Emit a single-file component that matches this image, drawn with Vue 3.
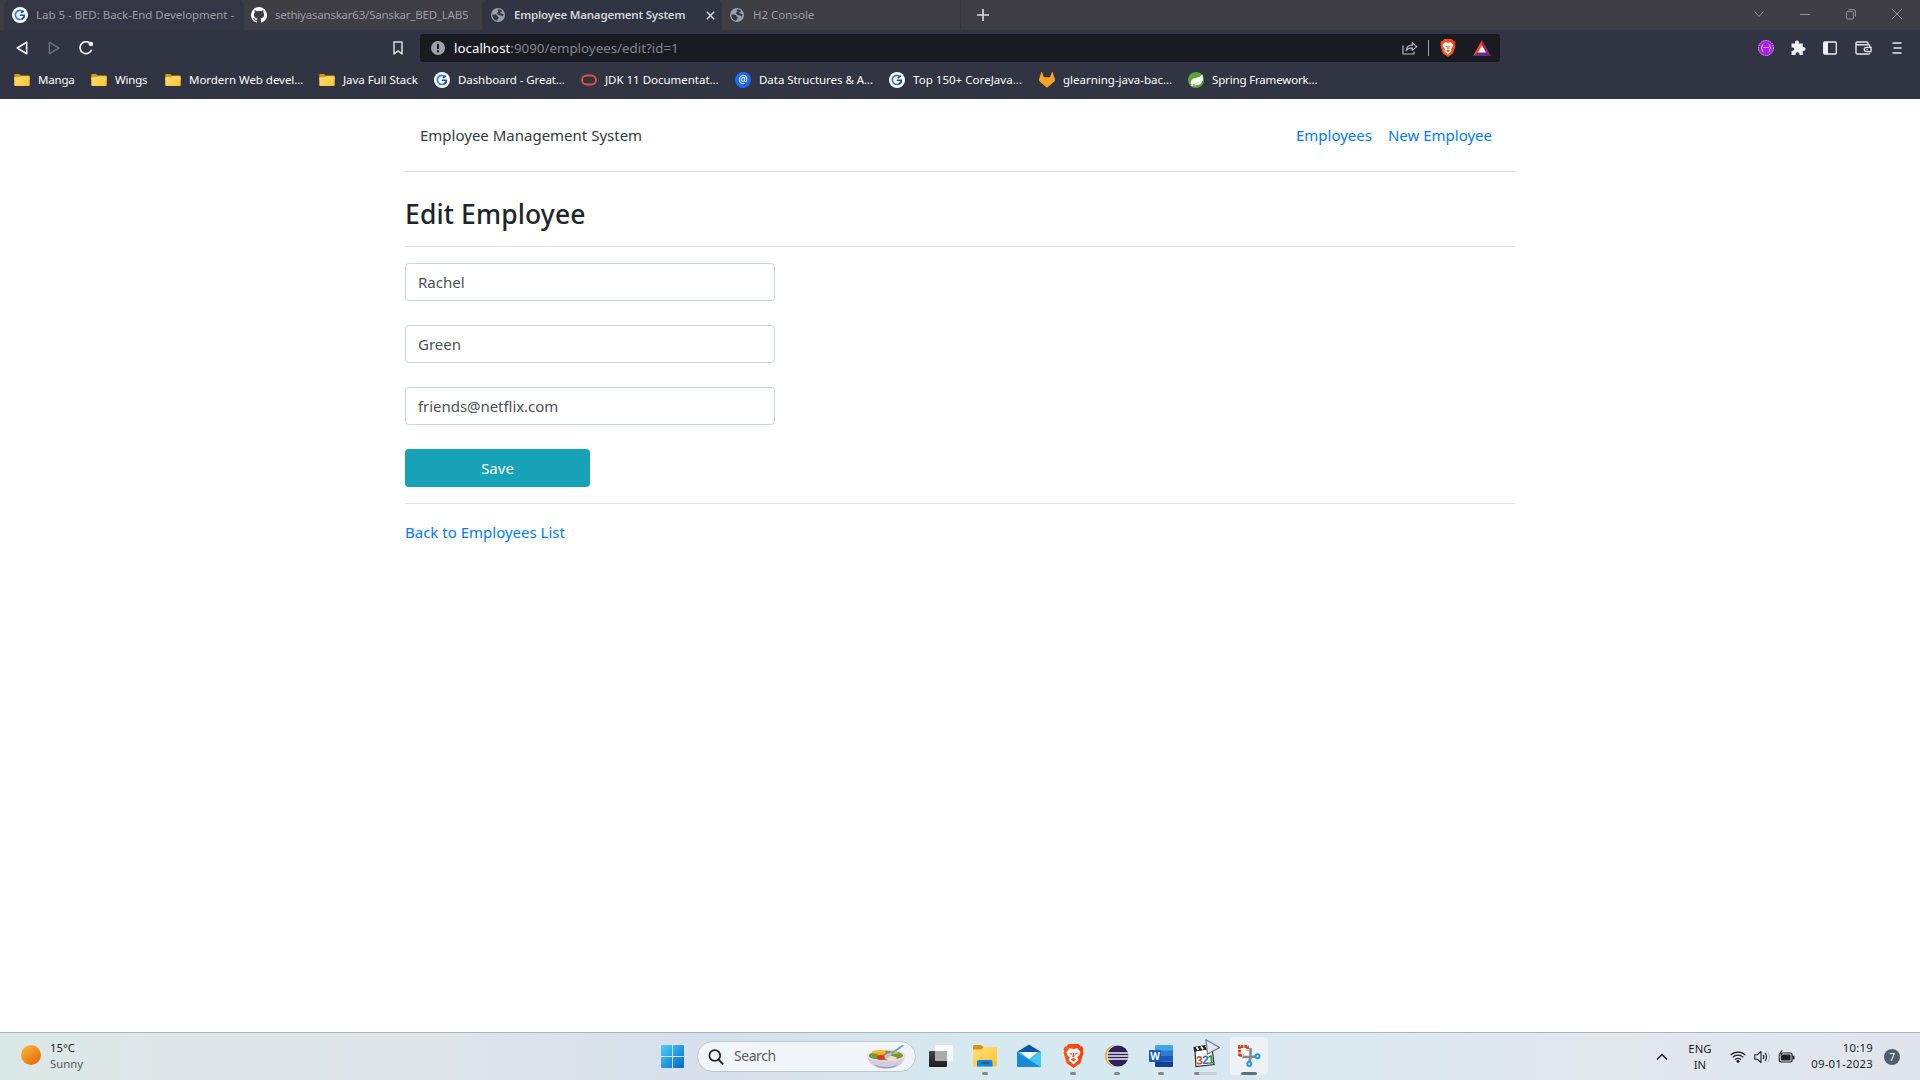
<script setup>
import { ref } from 'vue'

const firstName = ref('Rachel')
const lastName = ref('Green')
const email = ref('friends@netflix.com')

const bookmarks = [
  { icon: 'folder', label: 'Manga', width: 37, spacing: -0.2 },
  { icon: 'folder', label: 'Wings', width: 34, spacing: -0.2 },
  { icon: 'folder', label: 'Mordern Web devel...', width: 114, spacing: -0.04 },
  { icon: 'folder', label: 'Java Full Stack', width: 75, spacing: -0.04 },
  { icon: 'gl', label: 'Dashboard - Great...', width: 107, spacing: -0.08 },
  { icon: 'oracle', label: 'JDK 11 Documentat...', width: 114, spacing: -0.02 },
  { icon: 'at', label: 'Data Structures & A...', width: 114, spacing: -0.04 },
  { icon: 'gl', label: 'Top 150+ CoreJava...', width: 110, spacing: 0.04 },
  { icon: 'gitlab', label: 'glearning-java-bac...', width: 109, spacing: -0.01 },
  { icon: 'spring', label: 'Spring Framework...', width: 106, spacing: -0.16 },
]
</script>

<template>
  <div class="desktop">
    <svg class="defs" width="0" height="0" aria-hidden="true">
      <defs>
        <linearGradient id="braveG" x1="0" x2="1"><stop offset="0" stop-color="#ff5a1f" /><stop offset="1" stop-color="#fb3a0a" /></linearGradient>
        <linearGradient id="winG" x1="0" y1="0" x2="1" y2="1"><stop offset="0" stop-color="#4fd0fb" /><stop offset="1" stop-color="#0067c8" /></linearGradient>
        <linearGradient id="sunG" x1="0.1" y1="0" x2="0.8" y2="1"><stop offset="0" stop-color="#f4bc35" /><stop offset="1" stop-color="#ee650c" /></linearGradient>
        <linearGradient id="folderG" x1="0" y1="0" x2="1" y2="1"><stop offset="0" stop-color="#ffe17c" /><stop offset="1" stop-color="#fdc02f" /></linearGradient>
        <linearGradient id="darkG" x1="0" y1="0" x2="0" y2="1"><stop offset="0" stop-color="#444" /><stop offset="1" stop-color="#1c1c1c" /></linearGradient>
        <symbol id="globe" viewBox="0 0 14 14">
          <circle cx="7" cy="7" r="7" fill="#9b9ea6" />
          <path d="M1.4 6.700c2-.3 4.700 0 5 1.300.2 1 1.200.5 1.400 1.500.2 1.200-1.500 1.200-1.600 3.200C3.200 12.300 1.200 9.700 1.400 6.700zM6.500 1.600c1.700-.5 3.800.2 4.900 1.500-.8.3-1 1.200-2 1.100-.7-.1-.6.9.100 1 1.300.1 2 .8 3 1.100-.2.8-.3 1.500-.7 2.200-1-.3-1.500-1.300-2.700-1.300C7.500 7.100 6 6.500 6.200 5c.1-1 1.400-1 1.200-1.900-.1-.7-1-.6-.9-1.500z" fill="#353746" />
        </symbol>
        <symbol id="gl" viewBox="0 0 16 16">
          <circle cx="8" cy="8" r="8" fill="#fff" />
          <path d="M11.300 4.700A4.600 4.600 0 1 0 12.300 9.500" fill="none" stroke="#2a7de1" stroke-width="1.700" />
          <path d="M11.800 4 8.800 5.900M7.800 8.300h4.600c0 1.800-1 3-2.600 3.700" fill="none" stroke="#174ea6" stroke-width="1.500" />
        </symbol>
        <symbol id="brave" viewBox="0 0 20 24">
          <path d="M5 0h10l2.200 2.500 1.400-.2L20 5.400l-.6 1.500L20 9l-3.200 10.300L10 24l-6.800-4.700L0 9l.6-2.100L0 5.400l1.400-3.100 1.400.2z" fill="url(#braveG)" />
          <path d="M6 4.300 10 5l4-.7L17 7.900l-.7 2.500-2.500 3.200 1.200 2.500L10 20.500l-5-4.400 1.200-2.500-2.500-3.200L3 7.900z" fill="#fff" />
          <path d="m5.300 8.700 3.400.8-.5 1.500zM14.700 8.700l-3.400.8.5 1.500zM9.400 9h1.200l.5 4.200H8.900zM7.300 15.500 10 14.100l2.700 1.400L10 17.500z" fill="url(#braveG)" />
        </symbol>
      </defs>
    </svg>

    <header class="browser">
      <div class="tabstrip">
        <div class="tab first">
          <svg width="16" height="16"><use href="#gl" /></svg>
          <span class="t1">Lab 5 - BED: Back-End Development -</span>
        </div>
        <div class="tab second">
          <svg width="16" height="16" viewBox="0 0 16 16"><path fill="#fff" d="M8 0a8 8 0 0 0-2.530 15.590c.4.070.550-.170.550-.380v-1.490c-2.010.370-2.530-.490-2.690-.940-.090-.230-.480-.940-.820-1.130-.280-.150-.680-.520-.010-.530.630-.010 1.080.580 1.230.820.720 1.210 1.870.870 2.330.660.070-.520.280-.870.510-1.070-1.780-.2-3.640-.890-3.640-3.950 0-.870.310-1.590.820-2.150-.080-.2-.360-1.020.080-2.120 0 0 .670-.210 2.200.820a7.500 7.500 0 0 1 4 0c1.530-1.040 2.200-.820 2.200-.820.440 1.100.160 1.920.080 2.120.510.560.820 1.270.820 2.150 0 3.070-1.870 3.750-3.650 3.950.290.250.540.730.540 1.480v2.200c0 .210.150.460.550.380A8 8 0 0 0 8 0z" /></svg>
          <span class="t2">sethiyasanskar63/Sanskar_BED_LAB5</span>
        </div>
        <div class="tab active">
          <svg width="14" height="14"><use href="#globe" /></svg>
          <span class="t3">Employee Management System</span>
          <svg class="x" width="9" height="9" viewBox="0 0 9 9"><path d="m.8.8 7.400 7.400M8.200.8.8 8.200" stroke="#d4d4d9" stroke-width="1.500" /></svg>
        </div>
        <div class="tab last">
          <svg width="14" height="14"><use href="#globe" /></svg>
          <span class="t4">H2 Console</span>
        </div>
        <div class="newtab"><svg width="12" height="12" viewBox="0 0 12 12"><path d="M6 0v12M0 6h12" stroke="#dcdce0" stroke-width="1.600" /></svg></div>
        <div class="winctl">
          <svg width="12" height="12" viewBox="0 0 12 12"><path d="m1.500 3.500 4.500 5 4.500-5" /></svg>
          <svg width="12" height="12" viewBox="0 0 12 12"><path d="M1 6.500h10" /></svg>
          <svg width="12" height="12" viewBox="0 0 12 12"><rect x="1.500" y="3.500" width="7" height="7.500" rx="1" /><path d="M3.500 1.500h5a2 2 0 0 1 2 2v5" /></svg>
          <svg width="12" height="12" viewBox="0 0 12 12"><path d="m1 1 10 10M11 1 1 11" /></svg>
        </div>
      </div>

      <div class="toolbar">
        <svg class="back" width="12" height="14" viewBox="0 0 12 14"><path d="M10.700 1.200v11.600L1.200 7z" fill="none" stroke="#f1f1f4" stroke-width="1.600" stroke-linejoin="round" /></svg>
        <svg class="fwd" width="12" height="14" viewBox="0 0 12 14"><path d="M1.300 1.200v11.600L10.800 7z" fill="none" stroke="#6b6d79" stroke-width="1.500" stroke-linejoin="round" /></svg>
        <svg class="reload" width="15" height="14" viewBox="0 0 15 14"><path d="M11.500 2.600A6 6 0 1 0 12.700 8.800" fill="none" stroke="#f1f1f4" stroke-width="1.700" /><circle cx="11.900" cy="3" r="2.300" fill="#f1f1f4" /></svg>
        <svg class="mark" width="10" height="14" viewBox="0 0 10 14"><path d="M1 1h8v12l-4-3.200L1 13z" fill="none" stroke="#dcdce1" stroke-width="1.500" stroke-linejoin="round" /></svg>
        <div class="url">
          <svg width="14" height="14" viewBox="0 0 14 14"><circle cx="7" cy="7" r="7" fill="#9fa1a8" /><path d="M7 2.800v5.200M7 9.300v2" stroke="#191b22" stroke-width="2" /></svg>
          <span class="address"><b>localhost</b>:9090/employees/edit?id=1</span>
          <svg class="share" width="16" height="14" viewBox="0 0 16 14"><path d="M1 4.500V13h11v-2.500M4.200 9.600c.3-3.300 2.400-5.300 6-5.400V1.700L14.800 5.600l-4.600 3.800V6.900C7.500 6.900 5.600 7.700 4.200 9.600z" fill="none" stroke="#b4b5bb" stroke-width="1.200" stroke-linejoin="round" /></svg>
          <i class="sep"></i>
          <svg class="lion" width="16" height="18"><use href="#brave" /></svg>
          <svg class="bat" width="18" height="16" viewBox="0 0 18 16"><path d="M9 0 0 16l9-5z" fill="#ff4724" /><path d="M9 0l9 16-9-5z" fill="#9e1f63" /><path d="M0 16h18l-9-6z" fill="#662d91" /><path d="m9 5.500 4 7H5z" fill="#fff" /></svg>
        </div>
        <div class="actions">
          <svg width="16" height="16" viewBox="0 0 16 16"><circle cx="8" cy="8" r="7.500" fill="#a81ee6" stroke="#e3b5f7" stroke-dasharray="1.500 .8" /><path d="M5.300 4C3.800 4.300 4.800 7 3.200 8c1.600.7.600 3.700 2.100 4M10.700 4c1.500.3.500 3 2.100 4-1.600.7-.6 3.700-2.100 4M5.500 7.500h1.200M7.500 7.500h1.200M9.500 7.500h1.200" fill="none" stroke="#f4dcff" stroke-width=".9" /></svg>
          <svg width="16" height="16" viewBox="0 0 16 16"><path d="M1.500 3.500h3.700C4.500 1.700 5.500.5 7 .5s2.400 1.300 1.800 3h4v3.700c1.600-.4 2.700.4 2.700 1.700s-1.200 2.200-2.700 1.600V15H9.400c.3-1.600-.6-2.700-1.900-2.700S5.400 13.500 5.700 15H1.500v-4c1.700.3 2.700-.7 2.700-1.900S3.200 7.200 1.500 7.600z" fill="#f0f0f3" /></svg>
          <svg width="16" height="16" viewBox="0 0 16 16"><rect x="1.700" y="2" width="12.600" height="12" rx="1" fill="none" stroke="#f0f0f3" stroke-width="1.300" /><path d="M2 2h4v12H2z" fill="#f0f0f3" /></svg>
          <svg class="wallet" width="17" height="16" viewBox="0 0 17 16"><path d="M13 4.500V3.200c0-.8-.5-1.200-1.200-1.200H2.500C1.500 2 1 2.500 1 3.300v9.400c0 .9.500 1.300 1.300 1.300h11.200c.9 0 1.300-.5 1.300-1.300M1 3.800c0 .7.500 1 1.300 1h11.200c.9 0 1.300.5 1.300 1.300v1.500M16 7.400h-4.500c-3 0-3 4.200 0 4.200H16zM11.500 9.500h1.300" fill="none" stroke="#e4e4e8" stroke-width="1.400" /></svg>
          <svg class="menu" width="16" height="16" viewBox="0 0 16 16"><path d="M3.500 3h9M4.500 8h8M3.500 13h9" stroke="#e8e8ec" stroke-width="1.700" /></svg>
        </div>
      </div>

      <nav class="bookmarks">
        <div v-for="b in bookmarks" :key="b.label" class="bm">
          <svg v-if="b.icon === 'folder'" width="16" height="16" viewBox="0 0 16 16"><path d="M.3 3c0-.6.3-1 1-1h3.800L6.800 3.500h8c.5 0 .9.300.9.800V8H.3z" fill="#d99a10" /><path d="M.3 5.200h5.300L7.100 4.200h7.700c.5 0 .9.300.9.800v8.100c0 .6-.3.900-.9.900H1.200c-.6 0-.9-.3-.9-.9z" fill="url(#folderG)" /></svg>
          <svg v-else-if="b.icon === 'gl'" width="16" height="16"><use href="#gl" /></svg>
          <svg v-else-if="b.icon === 'oracle'" width="16" height="16" viewBox="0 0 16 16"><rect x="1" y="3.500" width="14" height="9" rx="4.500" fill="none" stroke="#e9513d" stroke-width="1.900" /></svg>
          <svg v-else-if="b.icon === 'at'" width="16" height="16" viewBox="0 0 16 16"><circle cx="8" cy="8" r="8" fill="#1f69f5" /><text x="8" y="11" class="at" text-anchor="middle">@</text></svg>
          <svg v-else-if="b.icon === 'gitlab'" width="16" height="16" viewBox="0 0 16 16"><path d="M2.300.3c.3-.5.800-.3.900.1l1.700 4.800h6.200l1.700-4.800c.2-.5.700-.5.900 0L16 7.200c.1.900-.1 1.900-.9 2.500L8 15.700l-7.100-6C.1 9.100-.2 8.100 0 7.200z" fill="#fca326" /></svg>
          <svg v-else width="16" height="16" viewBox="0 0 16 16"><circle cx="8" cy="8" r="8" fill="#5fa336" /><path d="M14.200 2.200c1 3.800 1 7.800-2 9.900-2.300 1.600-5.400 1.500-8.500 1.200 3.200-.5 6.300-1.800 8.300-4.500-2.400 2.500-5.300 3.300-8.600 3.800C1.700 9.700 3.600 6.600 7.300 5.900c2.800-.5 5.200-.9 6.900-3.700z" fill="#fff" /><circle cx="3.900" cy="13.500" r="1" fill="#fff" /></svg>
          <span :style="{ width: b.width + 'px', letterSpacing: b.spacing + 'px' }">{{ b.label }}</span>
        </div>
      </nav>
    </header>

    <main class="page">
      <div class="container">
        <nav class="navbar">
          <span class="brand">Employee Management System</span>
          <a class="emp">Employees</a>
          <a class="newemp">New Employee</a>
        </nav>
        <h3>Edit Employee</h3>
        <form @submit.prevent>
          <input v-model="firstName" type="text" />
          <input v-model="lastName" type="text" />
          <input v-model="email" type="text" class="mail" />
          <button type="submit">Save</button>
        </form>
        <a class="backlink">Back to Employees List</a>
      </div>
    </main>

    <footer class="taskbar">
      <div class="weather">
        <svg width="20" height="20" viewBox="0 0 20 20"><circle cx="10" cy="10" r="10" fill="url(#sunG)" /></svg>
        <div><p>15°C</p><p class="muted">Sunny</p></div>
      </div>

      <div class="apps">
        <svg class="win" width="23" height="23" viewBox="0 0 23 23"><path d="M1 0h10.100v11.100H0V1q0-1 1-1zM12 0h10q1 0 1 1v10.100H12zM0 12h11.100v11H1q-1 0-1-1zM12 12h11v10q0 1-1 1H12z" fill="url(#winG)" /></svg>
        <div class="search">
          <svg width="16" height="16" viewBox="0 0 16 16"><circle cx="6.800" cy="6.500" r="5.400" fill="none" stroke="#222" stroke-width="1.700" /><path d="m10.600 10.600 4 4.300" stroke="#222" stroke-width="1.900" stroke-linecap="round" /></svg>
          <span>Search</span>
          <svg class="bowl" width="40" height="24" viewBox="0 0 40 24">
            <path d="M1 10c1 8 6 13.500 19 13.500S38 18 39 10z" fill="#d2cde0" /><path d="M8 19c6 4 18 4 24 0-2 3-6 4.500-12 4.500S10 22 8 19z" fill="#a39bbb" />
            <ellipse cx="20" cy="10.500" rx="19.500" ry="6" fill="#e3dfee" /><ellipse cx="20" cy="10.500" rx="17" ry="4.700" fill="#b5743a" />
            <ellipse cx="13" cy="7.500" rx="7" ry="2.600" fill="#f3b91e" /><ellipse cx="8" cy="11" rx="4.500" ry="2.500" fill="#62a62e" /><ellipse cx="15" cy="12.500" rx="4" ry="2.300" fill="#d83a26" /><ellipse cx="25" cy="13" rx="6" ry="2.200" fill="#f4dfba" /><ellipse cx="31" cy="9.800" rx="4.500" ry="2.400" fill="#62a62e" /><ellipse cx="28" cy="7.500" rx="4" ry="1.500" fill="#f3b91e" />
            <path d="M36.500.7 24 9.500" stroke="#6fa5d8" stroke-width="2" stroke-linecap="round" /><ellipse cx="22" cy="10.500" rx="4" ry="2" transform="rotate(-30 22 10.500)" fill="#9cc9ee" />
          </svg>
        </div>
        <div class="app">
          <svg width="26" height="24" viewBox="0 0 26 24"><rect x="1" y="7" width="18" height="16" rx="1" fill="url(#darkG)" /><rect x="7" y="1" width="18" height="16" rx="1" fill="#fff" fill-opacity=".82" /><path d="M7 7h12v10H7z" fill="#999" fill-opacity=".7" /></svg>
        </div>
        <div class="app">
          <svg width="24" height="24" viewBox="0 0 24 24"><path d="M0 3q0-2 1.500-2H8l2.500 2H23q1 0 1 1.500V10H0z" fill="#d6940b" /><path d="M0 5.500h8.500l2-2.500H23q1 0 1 1v17.500q0 1-1 1H1q-1 0-1-1z" fill="url(#folderG)" /><path d="M4 22.500V18q0-2 2-2h11.500q2 0 2 2v4.500z" fill="#1583d8" /><path d="M8 19h8" stroke="#075998" stroke-width="1.300" /></svg><i></i>
        </div>
        <div class="app">
          <svg width="24" height="24" viewBox="0 0 24 24"><path d="m0 8 12-7.500L24 8v2H0z" fill="#0859a8" /><path d="M0 8h24v14q0 1-1 1H1q-1 0-1-1z" fill="#3dc2f5" /><path d="m3 8 9 7 9-7z" fill="#f5f7f9" /><path d="M0 8.300 24 23H1q-1 0-1-1z" fill="#168bd8" /><path d="m12 15.500 12-7.200V22q0 .5-.5.800z" fill="#46c5f6" /></svg>
        </div>
        <div class="app"><svg width="21" height="24"><use href="#brave" /></svg><i></i></div>
        <div class="app">
          <svg width="24" height="24" viewBox="0 0 24 24"><circle cx="11" cy="12" r="11" fill="#f7941e" /><circle cx="12.500" cy="12" r="11" fill="#e9edf3" /><circle cx="13" cy="12" r="10.500" fill="#2c2255" /><path d="M2.500 9h21.300M2 12h22M2.500 15h21.300" stroke="#eeeef5" stroke-width="1.300" /></svg><i></i>
        </div>
        <div class="app">
          <svg width="24" height="24" viewBox="0 0 24 24"><path d="M7 1h16q1 0 1 1v5H6V2q0-1 1-1z" fill="#41a5ee" /><path d="M6 6.500h18V12H6z" fill="#2b7cd3" /><path d="M6 12h18v5.500H6z" fill="#185abd" /><path d="M6 17.500h18V22q0 1-1 1H7q-1 0-1-1z" fill="#103f91" /><rect y="6" width="12" height="12" rx="1" fill="#185abd" /><text x="6" y="15.700" class="word" text-anchor="middle">W</text></svg><i></i>
        </div>
        <div class="app progress">
          <svg width="28" height="30" viewBox="0 0 28 30"><path d="m3 12 17-3 2 16.500-18 2z" fill="#fff" stroke="#2a2a2a" stroke-width="1.200" /><path d="m1.500 8 18-3 .6 4.500-18 3z" fill="#222" /><path d="m4.500 8 2 3M9 7.200l2 3M13.500 6.500l2 3" stroke="#fff" stroke-width="1.800" /><g class="count" transform="rotate(-5 12 20)"><text x="4" y="25" fill="#d74a22">3</text><text x="10" y="25" fill="#2c6fc2">2</text><text x="15.500" y="25" fill="#278b3a">1</text></g><path d="m14 .8 13.500 7.700L15.500 15z" fill="#dce6fb" stroke="#777987" stroke-width="1.200" /></svg><i></i>
        </div>
        <div class="app current">
          <svg width="26" height="26" viewBox="0 0 26 26"><path d="M3.500 13V3.500H12.500" fill="none" stroke="#cf3c12" stroke-width="2.800" stroke-dasharray="2.600 1" /><path d="M11.500 3.500v4M3.500 12.500h4" stroke="#cf3c12" stroke-width="2.600" stroke-dasharray="2.600 1" /><path d="M14.500 5v9L13.500 19M6.500 14h9l4-.5" fill="none" stroke="#83898f" stroke-width="2.600" /><circle cx="13.300" cy="21" r="2" fill="#fff" stroke="#159ce0" stroke-width="1.900" /><circle cx="21.500" cy="13.200" r="2" fill="#fff" stroke="#159ce0" stroke-width="1.900" /></svg><i></i>
        </div>
      </div>

      <div class="tray">
        <svg class="up" width="12" height="8" viewBox="0 0 12 8"><path d="m1 6.500 5-5 5 5" fill="none" stroke="#1d1f21" stroke-width="1.500" /></svg>
        <div class="lang"><p>ENG</p><p>IN</p></div>
        <svg class="wifi" width="16" height="13" viewBox="0 0 16 13"><g fill="none" stroke="#1d1f21" stroke-width="1.200"><path d="M.6 5.200a10.300 10.300 0 0 1 14.800 0M2.700 7.400a7.400 7.400 0 0 1 10.600 0M4.900 9.600a4.300 4.300 0 0 1 6.200 0" /></g><circle cx="8" cy="11.300" r="1.500" fill="#1d1f21" /></svg>
        <svg class="vol" width="16" height="14" viewBox="0 0 16 14"><g fill="none" stroke="#1d1f21" stroke-width="1.100" stroke-linejoin="round"><path d="M.8 4.800h2.500L7 1.500v11L3.300 9.200H.8zM9 4.800c1 1.200 1 3.200 0 4.400M11 3c2 2 2 6 0 8" /><path d="M13.500 1.500c2.500 3 2.500 8 0 11" stroke="#b9bfc5" /></g></svg>
        <svg class="bat2" width="17" height="13" viewBox="0 0 17 13"><rect x="1.300" y="3" width="12.800" height="9" rx="1.700" fill="none" stroke="#1d1f21" stroke-width="1.200" /><rect x="2.800" y="4.500" width="9.800" height="6" fill="#1d1f21" /><path d="M15.600 5.700v3.600" stroke="#1d1f21" stroke-width="1.700" /><path d="M3.500 0 .5 4.200h2L1.700 7.500 5.500 3h-2L5 0z" fill="#1d1f21" stroke="#e0e5ec" stroke-width=".5" /></svg>
        <div class="clock"><p>10:19</p><p>09-01-2023</p></div>
        <span class="badge">7</span>
      </div>
    </footer>
  </div>
</template>

<style>
body { margin: 0; overflow: hidden; }
</style>

<style scoped>
.desktop { width: 1920px; height: 1080px; display: flex; flex-direction: column; background: #fff; font-family: "Noto Sans", "Open Sans", sans-serif; overflow: hidden; }
.defs { position: absolute; }
svg { display: block; flex: none; }
p { margin: 0; }
span, a, p { white-space: nowrap; }

.browser { height: 99px; background: #313442; flex: none; }
.tabstrip { height: 30px; background: #3f3e45; display: flex; }
.tab { box-sizing: border-box; display: flex; align-items: center; gap: 8px; height: 30px; font-size: 11.5px; color: #9d9da2; padding-left: 8px; }
.tab span { overflow: hidden; padding-bottom: 2px; }
.first { width: 240px; margin-left: 4px; background: #343645; border-radius: 5px 5px 0 0; }
.second { width: 238px; padding-left: 7px; }
.active { width: 240px; background: #313442; border-radius: 5px 5px 0 0; color: #d3d3d8; font-weight: 600; padding-left: 9px; gap: 9px; }
.x { margin-left: 11px; }
.last { width: 239px; gap: 9px; border-right: 1px solid #37373a; }
.t1 { width: 200px; letter-spacing: -.03px; }
.t2 { letter-spacing: -.22px; }
.t3 { width: 172px; letter-spacing: -.2px; }
.t4 { letter-spacing: 0; }
.newtab { padding: 9px 0 0 16px; }
.winctl { margin: 8px 17px 0 auto; display: flex; gap: 34px; }
.winctl svg { fill: none; stroke: #929297; stroke-width: 1; }

.toolbar { height: 36px; display: flex; align-items: center; padding-left: 16px; }
.fwd { margin-left: 20px; }
.reload { margin-left: 19px; }
.mark { margin-left: 299px; }
.url { box-sizing: border-box; margin-left: 17px; width: 1080px; height: 28px; background: #191b22; border-radius: 3px; display: flex; align-items: center; padding-left: 11px; }
.address { margin-left: 9px; font-size: 13.300px; letter-spacing: .02px; color: #85868b; }
.address b { font-weight: 400; color: #fff; }
.share { margin-left: auto; }
.sep { width: 1px; height: 16px; background: #a4a5aa; margin: 0 11px 0 10px; }
.bat { margin: 0 9px 0 17px; }
.actions { display: flex; align-items: center; gap: 16px; margin-left: 258px; }
.wallet { margin-left: 1px; }
.menu { margin-left: 1px; }

.bookmarks { display: flex; height: 28px; gap: 16px; padding-left: 14px; }
.bm { display: flex; align-items: center; gap: 8px; height: 28px; color: #fff; font-size: 11.500px; }
.bm span { padding-bottom: 2px; }
.at { font-size: 10px; fill: #fff; }

.page { flex: 1; }
.container { width: 1110px; margin: 0 auto; color: #212529; font-size: 15px; }
a { color: #007bff; }
.navbar { box-sizing: border-box; height: 73px; border-bottom: 1px solid #dfe1e3; display: flex; align-items: center; padding: 0 23px 0 15px; }
.brand { margin-right: auto; color: #343a40; }
.newemp { margin-left: 16px; }
h3 { box-sizing: border-box; height: 75px; margin: 0; padding-top: 24px; border-bottom: 1px solid #e3e4e5; font-size: 26.500px; line-height: 36px; font-weight: 500; letter-spacing: .13px; }
form { height: 257px; box-sizing: border-box; padding-top: 16px; border-bottom: 1px solid #e3e4e5; }
input { box-sizing: border-box; display: block; width: 370px; height: 38px; margin: 0 0 24px; padding: 0 12px; border: 1px solid #ced4da; border-radius: 4px; font: 15px "Noto Sans", "Open Sans", sans-serif; color: #495057; }
.mail { letter-spacing: -.05px; }
button { display: block; width: 185px; height: 38px; border: 0; border-radius: 4px; background: #17a2b8; color: #fff; font: 15px "Noto Sans", "Open Sans", sans-serif; padding: 0; }
.backlink { display: block; margin-top: 16px; line-height: 24px; }

.taskbar { height: 48px; box-sizing: border-box; flex: none; border-top: 1px solid #adb4b9; position: relative; display: flex; justify-content: space-between; background: linear-gradient(90deg, #dae8e7 0, #dfe6e9 180px, #dfe5ea 420px, #d6dfeb 690px, #d7e4ed 860px, #d5e9f0 1000px, #d8e8f0 1200px, #e1e7ed 1600px, #e0e5ed 1920px); color: #1b1d1f; font-size: 11.300px; line-height: 16px; }
.weather { display: flex; padding: 7px 0 0 21px; gap: 9px; }
.weather svg { margin-top: 5px; }
.muted { color: #55595c; }
.apps { position: absolute; left: 661px; top: 0; display: flex; height: 47px; }
.win { margin-top: 12px; }
.search { box-sizing: border-box; width: 219px; height: 31px; margin: 8px 3px 0 13px; border: 1px solid #bcc8d2; border-radius: 16px; background: #f1f5f8; display: flex; align-items: center; padding: 0 9px 0 10px; font-size: 14px; color: #5d6165; }
.search span { margin-left: 10px; letter-spacing: -.45px; padding-bottom: 2px; }
.bowl { margin-left: auto; }
.app { width: 38px; height: 38px; margin: 4px 3px 0; position: relative; display: flex; align-items: center; justify-content: center; border-radius: 4px; }
.app i { position: absolute; left: 16px; bottom: 0; width: 6px; height: 3px; border-radius: 2px; background: #82898d; }
.current { background: #ecf2f6; }
.app.current i { left: 11px; width: 16px; background: #5b737f; }
.progress svg { position: absolute; left: 6px; top: 2px; }
.progress::after { content: ""; position: absolute; bottom: 0; left: 13px; width: 18px; height: 3px; border-radius: 2px; background: #c5d0d7; }
.app.progress i { left: 8px; }
.word { font: bold 10px "Noto Sans", sans-serif; fill: #fff; }
.count { font: bold 12px "Liberation Sans", sans-serif; }
.tray { display: flex; align-items: center; padding-right: 20px; }
.lang { margin-left: 20px; width: 24px; text-align: center; letter-spacing: .1px; padding-top: 1px; }
.wifi { margin-left: 18px; }
.vol { margin-left: 8px; }
.bat2 { margin-left: 8px; }
.clock { width: 64px; margin-left: 14px; text-align: right; display: flex; flex-direction: column; align-items: flex-end; padding-bottom: 1px; letter-spacing: .28px; }
.badge { width: 16px; height: 16px; border-radius: 50%; background: #4a616d; color: #fff; text-align: center; line-height: 16px; font-size: 10px; margin-left: 11px; }
</style>
